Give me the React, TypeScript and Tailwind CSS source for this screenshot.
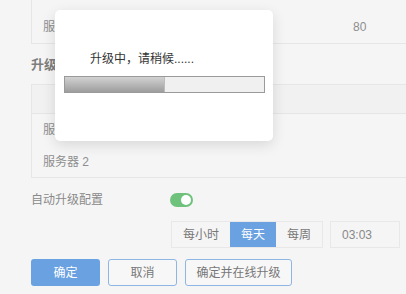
import React from "react";

const FONT = { fontFamily: '"Liberation Sans", "Noto Sans CJK SC", sans-serif' };

const Toggle = () => (
  <div className="flex items-center w-[23px] h-[14px] rounded-full bg-[#6fc27b] justify-end px-[2px]">
    <span className="block w-[10px] h-[10px] rounded-full bg-white" />
  </div>
);

const Segment = (props: { text: string; active?: boolean; w: string }) => (
  <div
    className={
      props.active
        ? `flex items-center justify-center h-full ${props.w} bg-[#69a1e1] text-white`
        : `flex items-center justify-center h-full ${props.w} text-[#777]`
    }>
    {props.text}
  </div>
);

const UpgradeModal = () => (
  <div className="absolute left-[55px] top-[10px] w-[218px] h-[131px] bg-white rounded-[5px] shadow-[0_4px_14px_rgba(0,0,0,0.12)] flex flex-col">
    <p className="pl-[35px] pt-[40px] text-[12px] leading-[18px] text-[#333]">升级中，请稍候......</p>
    <div className="ml-[9px] mt-[8px] w-[201px] h-[17px] border border-[#9a9a9a] bg-[#f0f0f0] flex">
      <div className="w-1/2 h-full bg-gradient-to-b from-[#d2d2d2] to-[#9d9d9d] border-r border-[#bdbdbd]" />
    </div>
  </div>
);

export default function App() {
  return (
    <div
      className="relative w-[406px] h-[294px] overflow-hidden bg-[#f5f5f5] text-[12px]"
      style={FONT}>
      <div className="flex flex-col pl-[31px]">
        <div className="-mt-[21px] border-l border-b border-[#e6e6e6] w-[400px] text-[#8e8e8e]">
          <div className="flex items-center h-[32px]">
            <span className="pl-[11px] w-[116px]">服务器 1</span>
            <span className="w-[205px]">1</span>
            <span>80</span>
          </div>
          <div className="flex items-center h-[32px]">
            <span className="pl-[11px] w-[116px]">服务器 1</span>
            <span className="w-[205px]">192.168.1.1</span>
            <span>80</span>
          </div>
        </div>

        <div className="h-[40px] flex items-end pb-[10px] text-[13px] font-bold text-[#7d7d7d]">升级服务器</div>

        <div className="border-l border-b border-t border-[#e6e6e6] w-[400px] text-[#8e8e8e]">
          <div className="h-[29px] bg-[#f1f1f1] border-b border-[#e6e6e6]" />
          <div className="flex items-center h-[32px] pl-[11px]">服务器 1</div>
          <div className="flex items-center h-[31px] pl-[11px]">服务器 2</div>
        </div>

        <div className="flex items-center h-[14px] mt-[15px] text-[#8a8a8a]">
          <span className="w-[139px]">自动升级配置</span>
          <Toggle />
        </div>

        <div className="flex items-center h-[27px] mt-[14px] ml-[140px]">
          <div className="flex h-full border border-[#e8e8e8]">
            <Segment text="每小时" w="w-[58px]" />
            <Segment text="每天" w="w-[46px]" active />
            <Segment text="每周" w="w-[46px]" />
          </div>
          <div className="ml-[7px] h-full w-[70px] border border-[#e8e8e8] flex items-center pl-[11px] text-[#888]">
            03:03
          </div>
        </div>

        <div className="flex h-[27px] mt-[11px] gap-[8px]">
          <button className="w-[69px] h-full rounded-[3px] bg-[#69a1e1] text-white">确定</button>
          <button className="w-[69px] h-full rounded-[3px] border border-[#8fb5e4] bg-[#f7f7f7] text-[#777]">
            取消
          </button>
          <button className="w-[107px] h-full rounded-[3px] border border-[#8fb5e4] bg-[#f7f7f7] text-[#777]">
            确定并在线升级
          </button>
        </div>
      </div>

      <UpgradeModal />
    </div>
  );
}
